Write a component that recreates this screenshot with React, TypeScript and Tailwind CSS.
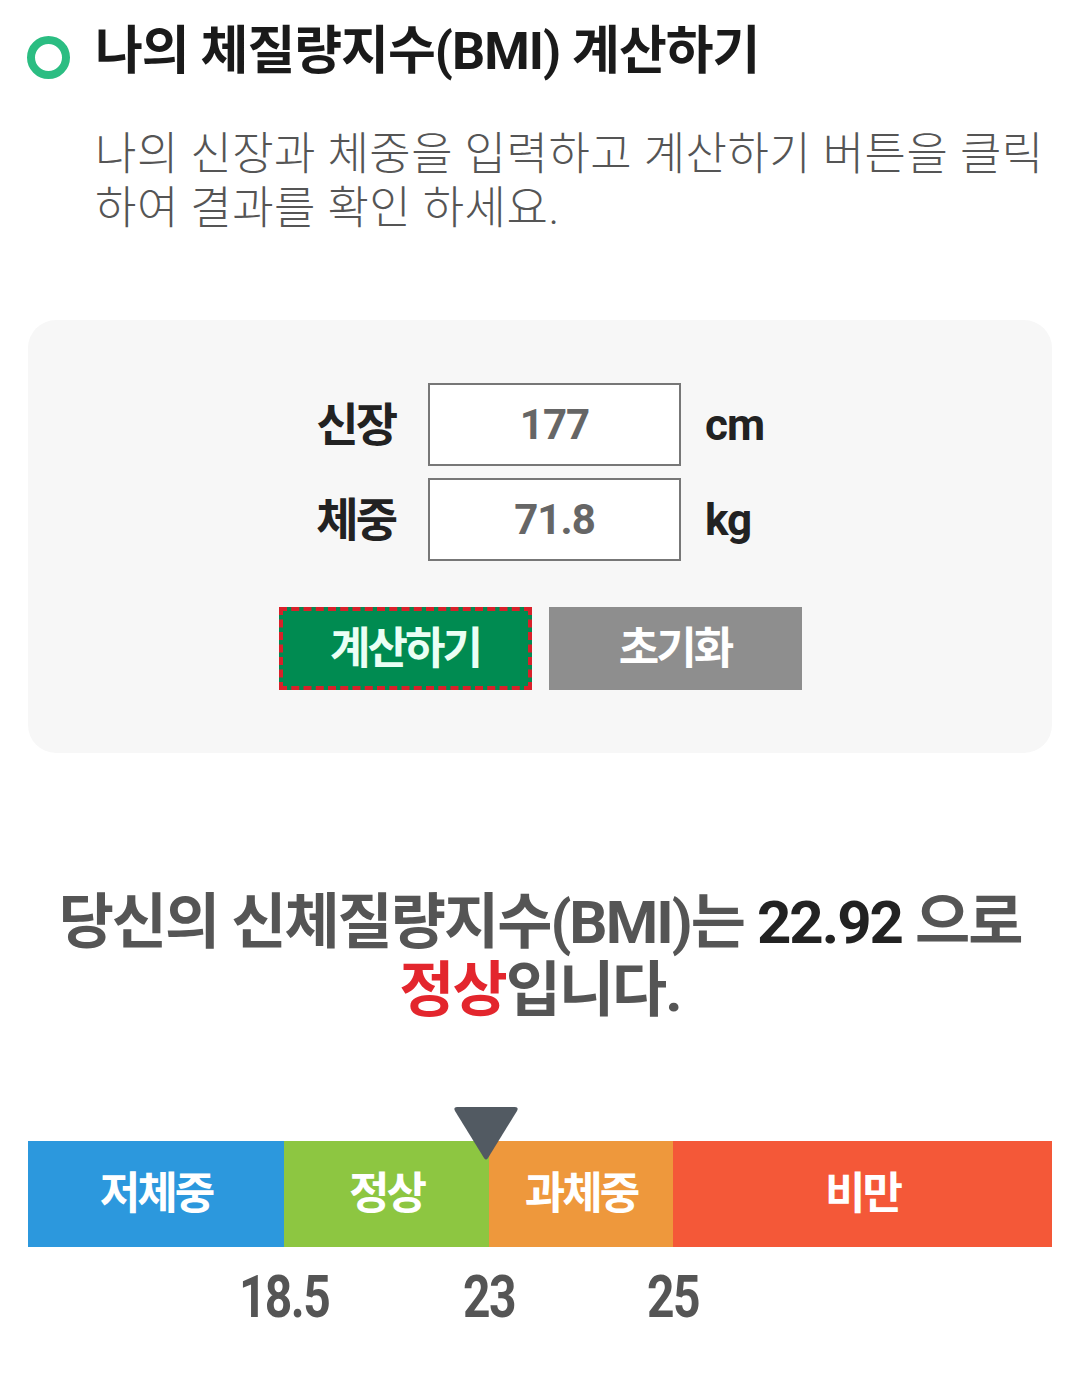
import React from "react";

const segments = [
  { label: "저체중", w: "w-[256px]", bg: "bg-[#2c98dd]" },
  { label: "정상", w: "w-[205px]", bg: "bg-[#8dc641]" },
  { label: "과체중", w: "w-[184px]", bg: "bg-[#ee983c]" },
  { label: "비만", w: "w-[379px]", bg: "bg-[#f45838]" },
];

export default function App() {
  return (
    <div className="w-[1080px] h-[1386px] overflow-hidden bg-white font-['Roboto','Noto_Sans_CJK_KR',sans-serif]">
      <header className="flex items-center pl-[27px] pt-[22px]">
        <span className="mt-[10px] block h-[43px] w-[43px] shrink-0 rounded-full border-[8px] border-[#2bbd82]" />
        <h1 className="ml-[25px] text-[52px] font-bold leading-[60px] tracking-[-1px] text-[#1a1a1a]">
          나의 체질량지수(BMI) 계산하기
        </h1>
      </header>

      <p className="ml-[95px] mt-[46px] text-[45px] font-light leading-[54px] tracking-[0.5px] text-[#555]">
        나의 신장과 체중을 입력하고 계산하기 버튼을 클릭
        <br />
        하여 결과를 확인 하세요.
      </p>

      <section className="mx-[28px] mt-[84px] h-[433px] rounded-[28px] bg-[#f7f7f7] pt-[63px]">
        <div className="flex flex-col gap-[12px]">
          {[
            { label: "신장", value: "177", unit: "cm" },
            { label: "체중", value: "71.8", unit: "kg" },
          ].map((r) => (
            <div key={r.label} className="flex items-center justify-center">
              <span className="w-[90px] text-right text-[46px] font-bold leading-none tracking-[-3px] text-[#222]">
                {r.label}
              </span>
              <input
                readOnly
                value={r.value}
                className="ml-[33px] h-[83px] w-[253px] border-2 border-[#777] bg-white text-center text-[42px] font-bold tracking-[-1px] text-[#666] outline-none"
              />
              <span className="ml-[24px] w-[70px] text-[44px] font-bold leading-none tracking-[-1px] text-[#222]">
                {r.unit}
              </span>
            </div>
          ))}
        </div>
        <div className="mt-[46px] flex justify-center gap-[17px]">
          <button className="flex h-[83px] w-[253px] items-center justify-center border-[4px] border-dashed border-[#d9202a] bg-[#008b51] text-[44px] font-bold tracking-[-3px] text-[#eafff5]">
            계산하기
          </button>
          <button className="flex h-[83px] w-[253px] items-center justify-center bg-[#8e8e8e] text-[44px] font-bold tracking-[-3px] text-white">
            초기화
          </button>
        </div>
      </section>

      <div className="mt-[136px] text-center text-[60px] font-bold leading-[68px] tracking-[-2px] text-[#555]">
        <p>
          당신의 신체질량지수(BMI)는 <span className="text-[#222]">22.92</span> 으로
        </p>
        <p>
          <span className="text-[#e3262d]">정상</span>입니다.
        </p>
      </div>

      <div className="relative mx-[28px] mt-[116px] flex h-[106px]">
        {segments.map((s) => (
          <div
            key={s.label}
            className={`${s.w} ${s.bg} flex items-center justify-center text-[44px] font-bold tracking-[-3px] text-white`}
          >
            {s.label}
          </div>
        ))}
        <svg
          className="absolute left-[425px] top-[-34px]"
          width="66"
          height="54"
          viewBox="0 0 66 54"
        >
          <path
            d="M4 0 H62 Q66 0 64 4 L35 51 Q33 54 31 51 L2 4 Q0 0 4 0 Z"
            fill="#525a62"
          />
        </svg>
      </div>

      <div className="mx-[28px] mt-[20px] flex h-[60px] text-[60px] font-bold leading-[60px] text-[#555]">
        <div className="w-[256px]" />
        {["18.5", "23", "25"].map((v, i) => (
          <div key={v} className={`${i === 0 ? "w-[205px]" : i === 1 ? "w-[184px]" : "w-[379px]"} relative`}>
            <span className="absolute left-0 top-0 -translate-x-1/2 scale-x-80 tracking-[-2px]">{v}</span>
          </div>
        ))}
      </div>
    </div>
  );
}
